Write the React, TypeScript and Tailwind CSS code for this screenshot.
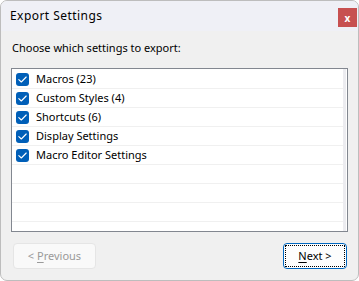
import React from "react";

const items = [
  "Macros (23)",
  "Custom Styles (4)",
  "Shortcuts (6)",
  "Display Settings",
  "Macro Editor Settings",
];

function Check() {
  return (
    <div className="w-[13px] h-[13px] rounded-[3px] bg-[#005fb8] flex items-center justify-center shrink-0">
      <svg width="9" height="7" viewBox="0 0 9 7" fill="none">
        <path d="M0.8 3.6 L3.3 6 L8.2 1" stroke="white" strokeWidth="1.1" strokeLinecap="round" strokeLinejoin="round" />
      </svg>
    </div>
  );
}

export default function App() {
  return (
    <div
      className="w-[359px] h-[281px] border border-[#bdbdbd] rounded-[7px] overflow-hidden flex flex-col bg-[#f0f0f0] text-[11px] text-black"
      style={{ fontFamily: '"Segoe UI", "Noto Sans", sans-serif' }}
    >
      <div className="h-[30px] bg-[#eff0f6] flex items-start shrink-0">
        <div className="pl-[9px] pt-[7px] leading-[16px] text-[12px] tracking-[0.45px]">Export Settings</div>
        <div className="ml-auto mt-[7px] mr-[1px] w-[19px] h-[19px] bg-[#c75050] flex items-center justify-center text-white font-bold text-[10px] leading-none">
          x
        </div>
      </div>
      <div className="flex flex-col flex-1 px-[10px]">
        <div className="mt-[9px] leading-[16px] pl-[1px]">Choose which settings to export:</div>
        <div className="mt-[12px] h-[164px] border border-[#828790] bg-white flex">
          <div className="flex-1 flex flex-col pt-[1px]">
            {items.map((t) => (
              <div key={t} className="h-[19px] border-b border-[#f0f0f0] flex items-center pl-[4px] gap-[7px] leading-[16px]">
                <Check />
                <span>{t}</span>
              </div>
            ))}
            {[0, 1, 2].map((i) => (
              <div key={i} className="h-[19px] border-b border-[#f0f0f0]" />
            ))}
          </div>
          <div className="w-[3px] bg-[#ececf0]" />
          <div className="w-[1px]" />
        </div>
        <div className="mt-[11px] flex justify-between">
          <div className="ml-[2px] w-[83px] h-[26px] border border-[#e5e5e5] rounded-[4px] bg-[#f9f9f9] flex items-center justify-center text-[#9a9a9a]">
            <span>
              &lt; <span className="underline underline-offset-2">P</span>revious
            </span>
          </div>
          <div className="mr-[1px] w-[64px] h-[26px] border border-[#0067c0] rounded-[4px] bg-[#fdfdfd] p-[1px]">
            <div className="w-full h-full border border-dotted border-black flex items-center justify-center">
              <span>
                <span className="underline underline-offset-2">N</span>ext &gt;
              </span>
            </div>
          </div>
        </div>
      </div>
    </div>
  );
}
